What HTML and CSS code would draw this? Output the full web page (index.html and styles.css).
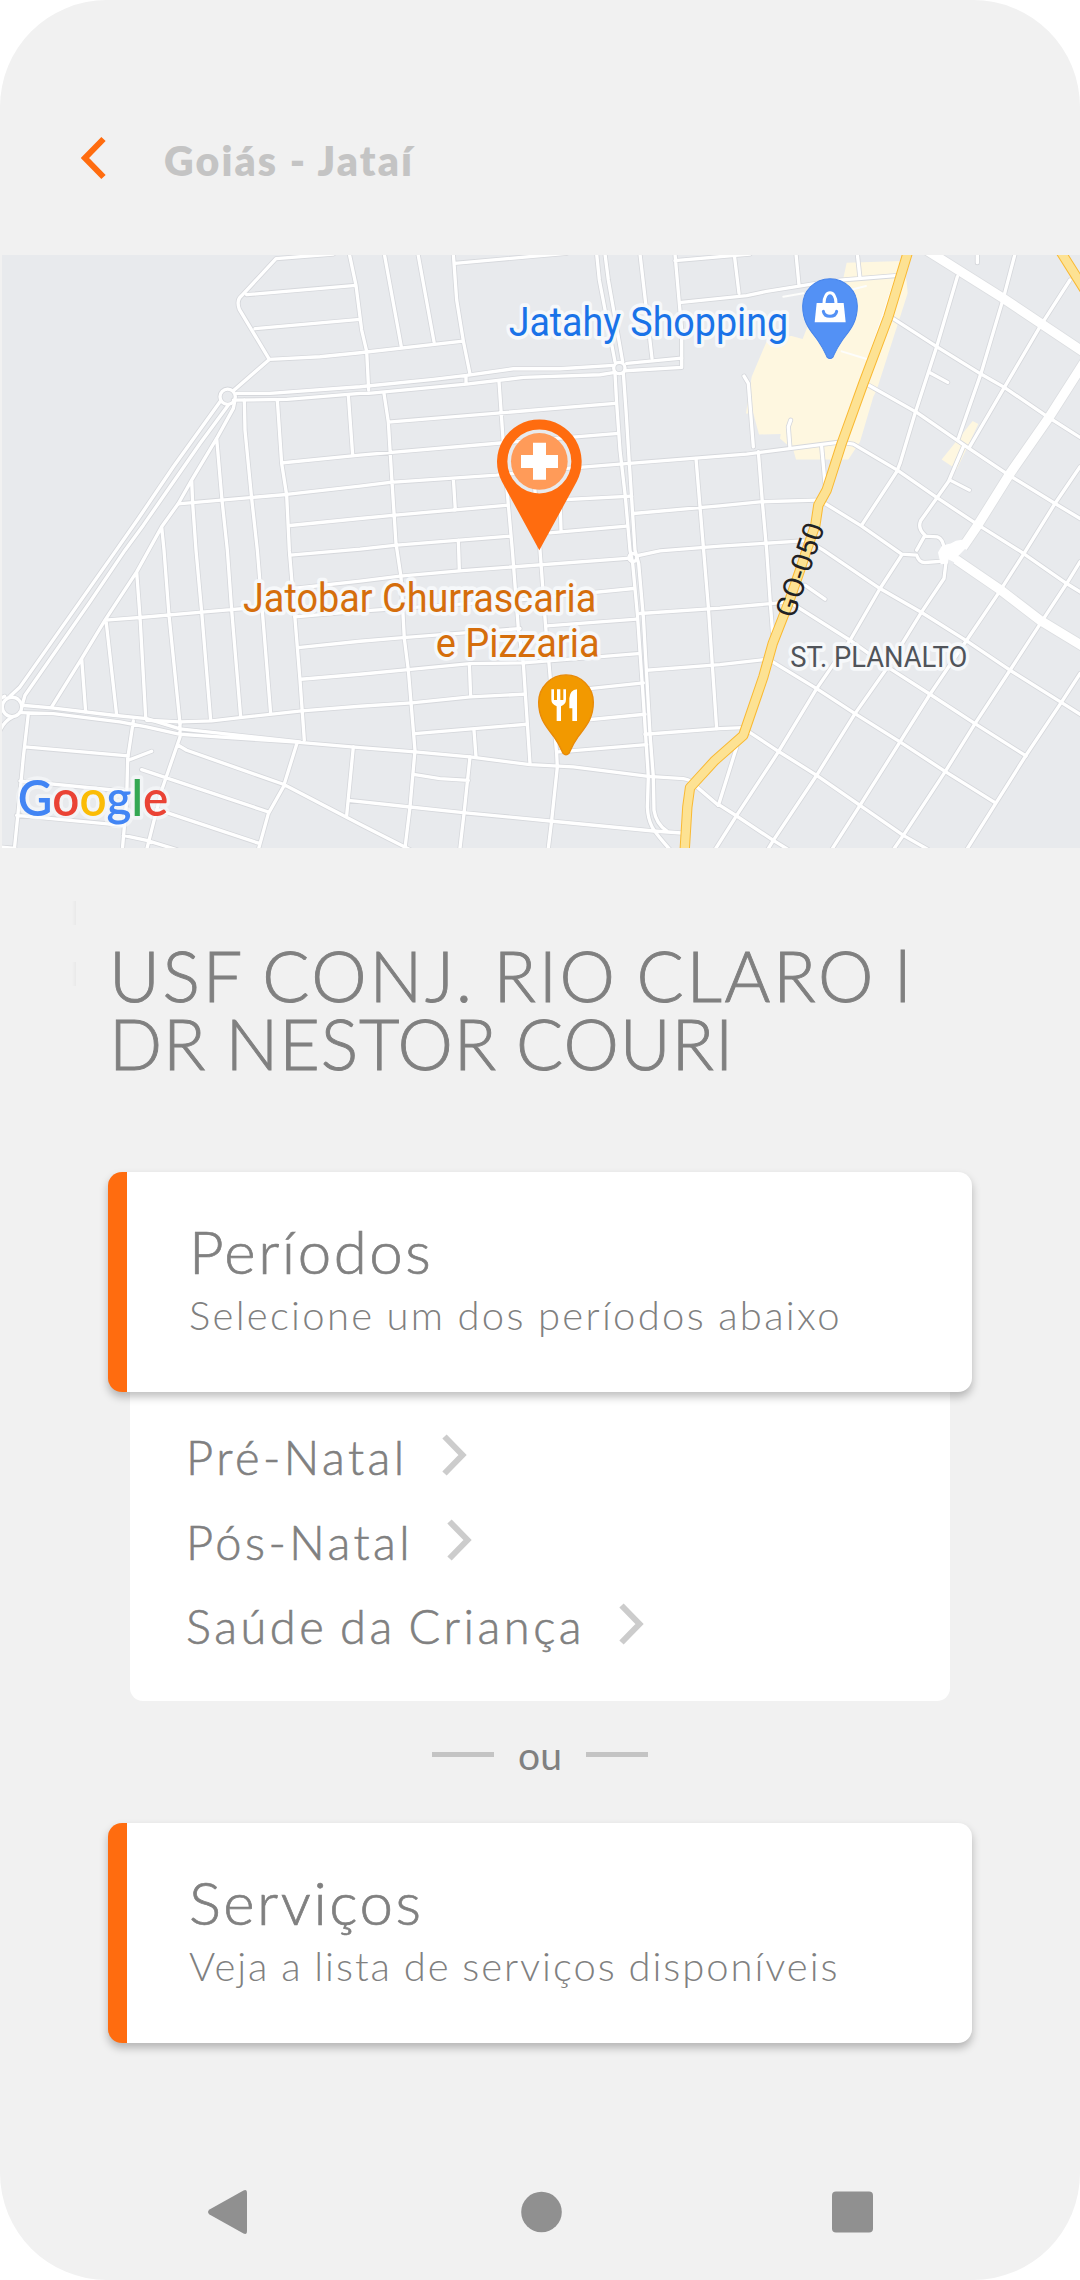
FILE: index.html
```html
<!DOCTYPE html>
<html lang="pt-BR">
<head>
<meta charset="utf-8">
<title>Unidade de saúde</title>
<link rel="stylesheet" href="styles.css">
</head>
<body>
<main class="screen">
  <header class="topbar">
    <svg class="back" viewBox="0 0 26 44"><path d="M22.500 3L4 22l18.500 19"/></svg>
    <span class="place">Goiás - Jataí</span>
  </header>

  <svg class="map" viewBox="6 15 3234 1778" preserveAspectRatio="none">
    <defs>
      <g id="streets">
        <path d="M1000 12L828 26 725 137Q708 150 718 178L808 328 700 422M740 134L1068 106M765 236L1080 208M808 328L960 320 1080 308 1390 273M1048 12L1068 106 1085 240 1100 304 1106 420M1153 12L1204 290M1254 12L1302 275M1360 12L1370 150 1390 273 1410 372M1365 40L1700 10"/>
        <path d="M710 430H810L1080 410 1300 388 1400 376 1540 356H1680L1840 346M700 450L860 448 1080 430 1105 430 1400 402 1570 382 1800 374 1845 367M1398 376V402M1880 340L2045 324V352L1875 362"/>
        <path d="M1790 12L1798 90 1845 335M1815 12L1825 90 1868 335M1845 370L1850 460 1860 600 1876 740 1890 900 1898 940 1912 1090 1930 1350 1945 1580 1942 1670C1945 1730 1965 1745 2010 1798M1870 370L1878 480 1888 640 1905 900 1916 940 1930 1100 1950 1450 1960 1580 1962 1680Q1968 1720 2000 1742M1920 12L1956 325M2025 12L2045 240V324M2025 32L2250 12M2045 157L2240 137 2300 124 2500 92 2685 77M2203 15L2217 130M2388 12L2397 105M2572 12L2580 85"/>
        <path d="M1152 430L1165 516 1175 680 1188 880 1203 980 1213 1165 1225 1260 1245 1500 1230 1670 1215 1793M1165 516L1845 460M850 638L1080 615 1510 578 1855 550M1497 395L1510 580 1525 765 1537 900 1555 1135 1570 1240 1590 1540M535 761L860 733 1080 708 1170 697 1490 675 1700 655 1860 642 2240 612 2520 576 2560 582 2692 660 2810 742 2940 828 3060 903 3200 1000 3245 1028M870 826L1080 805 1185 795 1525 765M1700 748L1895 738M1360 685L1366 780M870 915L1080 897 1190 885 1530 858M1650 848L1880 828M1680 740L1683 840M1603 700L1620 900 1637 1130 1647 1240 1670 1510 1672 1550 1655 1710 1645 1793M1375 870L1378 960"/>
        <path d="M2088 625L2110 890 2125 1070 2150 1435M1900 790L2160 767 2280 755 2450 750M1915 916L1980 902 2160 888 2410 872M880 1015L1080 993 1200 978 1380 962 1890 924M885 1100L1080 1083 1550 1050 1900 1015M895 1192L1080 1173 1210 1162 1560 1135M1640 1127L1910 1107M903 1287L1080 1272 1225 1258 1410 1240 1570 1238 1915 1210M440 1410L540 1415 635 1412 720 1402 905 1382 1080 1368 1235 1358 1410 1340 1570 1332M1740 1318L1930 1298M1408 1240L1412 1340M1245 1450L1580 1422M1750 1410L1935 1392M1422 1440L1428 1520M1675 1505L1940 1483M1240 1572L1320 1585 1405 1590M1410 1520L1392 1690 1380 1793M1045 1650L1230 1670 1390 1687 1650 1712 1960 1742 2045 1748M1060 1490L1040 1695"/>
        <path d="M65 1365L155 1373 340 1395 440 1405 540 1436 900 1475M60 1387L160 1390 360 1415 440 1430 540 1452 880 1475 1080 1492 1245 1505 1410 1520 1590 1543 1720 1550 1945 1578 2050 1585Q2068 1588 2072 1594L2155 1665M535 1485L560 1500 850 1602 1080 1722 1230 1798M892 1475L850 1610 805 1690 775 1798M425 1558L805 1685M480 1680L780 1780M370 1755L440 1770 530 1798M540 1420V1460L485 1620 440 1798M400 1412L383 1525 380 1650 367 1798M75 1490L385 1517M385 1530L455 1503M85 1390L70 1520 55 1680 43 1798M60 1592L370 1622M50 1695L370 1725M0 1790L45 1794M0 1440Q15 1410 38 1400M0 1345L14 1338"/>
        <path d="M660 455L520 650 415 805 345 905 250 1040 60 1310 30 1338M685 465L600 580 510 710 430 825 375 900 270 1055 75 1335 65 1370M704 455L700 475 650 565 575 690 535 760 485 830 410 965 315 1110 245 1225 155 1370M733 450L735 540 755 745 772 900 790 1120 812 1390M832 450L845 640 860 735 868 900 885 1105 900 1290 913 1470M1045 435L1058 615M650 565L666 750 682 900 695 1080 722 1400M575 690L578 760 588 900 605 1085 632 1410M485 830L492 900 507 1095 540 1420M410 965L420 1100 437 1400M318 1110L350 1395M245 1225L257 1385M315 1110L420 1102 605 1086 790 1070"/>
        <path d="M2872 80L2810 290 2745 490 2700 640 2690 665 2585 825M3045 12L3010 145 2943 370 2875 565M2932 12V38M3210 90L3120 230 3013 412 2908 592M2890 590L2845 695 2762 812Q2752 835 2775 855L2750 900M2775 858L2812 860Q2830 865 2833 900M3240 650L3165 760 3075 905 2998 1025 2900 1170 2790 1332 2700 1475 2580 1665 2495 1798M3240 935L3200 1000 3118 1125 3030 1260 2925 1420 2835 1565 2710 1755 2680 1798M3240 1270L3185 1355 3078 1515 2990 1655 2900 1798M2765 1085L2660 1255 2565 1390 2450 1575 2320 1770 2303 1798M2840 920L2832 985 2765 1085M2705 915L2640 1015 2550 1170 2450 1315 2335 1505 2210 1695 2145 1798M2210 1490L2160 1650 2155 1665"/>
        <path d="M2675 203L2810 290 2943 372 3013 412 3143 500 3245 565M2605 405L2750 487 2900 590 3030 677 3165 760 3245 808M2475 760L2585 828 2705 912 2750 915Q2757 937 2775 937L2830 933M2420 870L2470 900 2640 1015 2765 1087 2900 1172 3030 1260 3185 1357 3245 1395M2360 1050L2550 1170 2670 1255 2790 1332 2925 1420 3078 1517M2310 1230L2450 1315 2565 1390 2700 1475 2835 1563 2985 1657M2240 1440L2335 1503 2450 1575 2580 1665 2710 1755 2785 1798M2160 1665L2210 1697 2320 1770 2365 1798M2415 1005L2475 1047M2790 368L2843 397M2850 690L2908 720M2232 378L2245 400 2260 590M2372 510L2365 530 2370 595M2275 605L2287 755 2300 900 2311 1060 2318 1150M2465 590L2475 700M1920 1090L2160 1074 2360 1056M1940 1260L2160 1243 2295 1228M1935 1452L2160 1435 2230 1432"/>
        <circle cx="683" cy="440" r="23"/><circle cx="1858" cy="354" r="17"/><circle cx="1899" cy="922" r="12"/><circle cx="36" cy="1370" r="29"/>
      </g>
      <g id="avenues">
        <path d="M2760 -12L3010 145 3260 312M3262 322L3145 505 3030 670 2930 830 2888 892"/>
        <path d="M2868 928L3000 1018 3120 1110 3260 1195"/>
      </g>
      <path id="pin-shape" d="M-82 0A82 82 0 0 1 82 0C82 52 56 76 36 104 18 130 14 143 9 153Q0 162 -9 153C-14 143 -18 130 -36 104-56 76-82 52-82 0Z"/>
    </defs>

    <rect class="land" x="0" y="0" width="3240" height="1800"/>
    <path class="area" d="M2540 38L2705 33 2720 95 2723 130 2630 420 2620 440 2580 575 2545 628H2388L2380 600 2340 565 2342 552 2277 553 2260 490H2238L2255 380 2305 262 2375 258 2408 267 2430 210 2530 85ZM2918 513L2935 522 2870 658 2825 628Z"/>
    <use class="street-edge" href="#streets"/>
    <use class="avenue-edge" href="#avenues"/>
    <use class="street" href="#streets"/>
    <path class="lane" d="M2350 140L2410 130M2550 120L2598 108M2525 304L2600 327M2685 90L2580 400"/>
    <use class="avenue" href="#avenues"/>
    <path class="junction" d="M2814 907L2826 886 2852 880 2868 872 2904 866 2905 886 2874 918 2880 945 2846 928 2844 940 2822 942Z"/>
    <g id="highway">
      <path class="highway-edge" d="M2722 12L2665 200 2590 400 2525 580 2480 720 2455 765 2446 825 2418 905 2400 960 2365 1060 2318 1180 2290 1280 2230 1455 2145 1530 2070 1612 2062 1670 2054 1800M3182 5L3270 145"/>
      <path class="highway" d="M2722 12L2665 200 2590 400 2525 580 2480 720 2455 765 2446 825 2418 905 2400 960 2365 1060 2318 1180 2290 1280 2230 1455 2145 1530 2070 1612 2062 1670 2054 1800M3182 5L3270 145"/>
    </g>

    <g class="label">
      <text class="shop" x="1526" y="258" textLength="838" lengthAdjust="spacingAndGlyphs">Jatahy Shopping</text>
      <text class="food" x="729" y="1084" textLength="1060" lengthAdjust="spacingAndGlyphs">Jatobar Churrascaria</text>
      <text class="food" x="1307" y="1219" textLength="492" lengthAdjust="spacingAndGlyphs">e Pizzaria</text>
      <text class="district" x="2371" y="1250" textLength="531" lengthAdjust="spacingAndGlyphs">ST. PLANALTO</text>
      <text class="route" transform="translate(2382 1107) rotate(-71.500)" textLength="292" lengthAdjust="spacingAndGlyphs">GO-050</text>
      <text class="google" x="53" y="1698" textLength="452" lengthAdjust="spacingAndGlyphs"><tspan class="g-blue">G</tspan><tspan class="g-red">o</tspan><tspan class="g-yellow">o</tspan><tspan class="g-blue">g</tspan><tspan class="g-green">l</tspan><tspan class="g-red">e</tspan></text>
    </g>

    <g transform="translate(2490 168)">
      <use class="pin-shop" href="#pin-shape"/>
      <path class="glyph" d="M-40 -9H41L47 49H-46Z"/>
      <path class="glyph-line" d="M-18 -8C-18 -50 18 -50 18 -8"/>
      <path class="smile" d="M-20 16C-16 36 16 36 20 16"/>
    </g>
    <g transform="translate(1698 1356)">
      <use class="pin-food" href="#pin-shape"/>
      <path class="glyph" d="M-44 -39H-36V-7H-27V-39H-17V-7H-8V-39H0V-8Q0 6 -15 12V56H-28V12Q-44 6 -44 -8ZM33 -39V56H19V18H10V-12Q12 -38 33 -39Z"/>
    </g>
    <g transform="translate(1618 634)">
      <path class="pin-unit" fill-rule="evenodd" d="M0 266L-112 61A127 127 0 1 1 112 61ZM96 0A96 96 0 1 0 -96 0 96 96 0 1 0 96 0Z"/>
      <circle class="pin-core" r="85"/>
      <path class="glyph" d="M-19 -56H20V-19H56V20H20V55H-19V20H-55V-19H-19Z"/>
    </g>
  </svg>

  <h1 class="unit"><span class="unit-first">USF CONJ. RIO CLARO l</span><br><span class="unit-second">DR NESTOR COURI</span></h1>

  <section class="card">
    <h2>Períodos</h2>
    <p>Selecione um dos períodos abaixo</p>
  </section>
  <ul class="options">
    <li>Pré-Natal<svg class="go" viewBox="0 0 26 42"><path d="M3.500 2.500L21.500 21 3.500 39.500"/></svg></li>
    <li>Pós-Natal<svg class="go" viewBox="0 0 26 42"><path d="M3.500 2.500L21.500 21 3.500 39.500"/></svg></li>
    <li>Saúde da Criança<svg class="go" viewBox="0 0 26 42"><path d="M3.500 2.500L21.500 21 3.500 39.500"/></svg></li>
  </ul>
  <div class="or">ou</div>
  <section class="card">
    <h2>Serviços</h2>
    <p class="services-hint">Veja a lista de serviços disponíveis</p>
  </section>

  <nav class="system">
    <svg viewBox="0 0 40 46"><path d="M2 20.500L36 1.500Q39.500 0 39.500 4V42Q39.500 46 36 44.500L2 25.500Q-1 23 2 20.500Z"/></svg>
    <svg class="home" viewBox="0 0 41 41"><circle cx="20.500" cy="20.500" r="20.300"/></svg>
    <svg viewBox="0 0 41 41"><rect width="41" height="41" rx="4"/></svg>
  </nav>
</main>
</body>
</html>
```
FILE: styles.css
```css
* { box-sizing: border-box; }
body { margin: 0; background: #fff; }
h1, h2, p, ul { margin: 0; padding: 0; font-weight: 300; }
.screen {
  display: flex;
  flex-direction: column;
  width: 1080px;
  height: 2280px;
  overflow: hidden;
  background: #f1f1f1;
  border-radius: 107px;
  font-family: Lato, sans-serif;
  color: #808080;
}
.topbar {
  flex: none;
  display: flex;
  align-items: flex-start;
  gap: 57px;
  height: 255px;
  padding: 136px 0 0 81px;
}
.back { width: 26px; height: 44px; fill: none; stroke: #ff6c0f; stroke-width: 6; }
.place { color: #c4c4c4; font-size: 41px; font-weight: 800; line-height: 50px; letter-spacing: 2.1px; }

.map { flex: none; display: block; width: 1078px; height: 593px; margin-left: 2px; }
.land { fill: #e8eaed; }
.area { fill: #fef7e0; }
.street, .street-edge, .avenue, .avenue-edge, .lane, .highway, .highway-edge {
  fill: none;
  stroke-linejoin: round;
  stroke-linecap: round;
}
.street-edge { stroke: #d6d8dc; stroke-width: 15; }
.street { stroke: #fff; stroke-width: 10; }
.lane { stroke: #fdfdfb; stroke-width: 6; }
.avenue, .avenue-edge { stroke-linecap: butt; }
.avenue-edge { stroke: #dcdee1; stroke-width: 33; }
.avenue { stroke: #fff; stroke-width: 28; }
.junction { fill: #fff; }
.highway-edge { stroke: #f9b932; stroke-width: 31; }
.highway { stroke: #fde293; stroke-width: 25; }
.label text {
  font-family: Roboto, sans-serif;
  font-size: 123px;
  paint-order: stroke;
  stroke: rgba(248, 250, 252, .9);
  stroke-width: 22px;
  stroke-linejoin: round;
}
.label .shop { fill: #1a73e8; }
.label .food { fill: #d56e0c; }
.label .district { fill: #50545a; font-size: 87px; }
.label .route { fill: #202124; font-size: 87px; stroke: none; }
.label .google { font-family: Lato, sans-serif; font-weight: 600; font-size: 150px; stroke: rgba(248, 250, 252, .6); }
.g-blue { fill: #4285f4; }
.g-red { fill: #ea4335; }
.g-yellow { fill: #fbbc05; }
.g-green { fill: #34a853; }
.pin-shop { fill: #5391f5; stroke: #4583ea; stroke-width: 3; }
.pin-food { fill: #f29900; stroke: #e88a08; stroke-width: 4; }
.pin-unit { fill: #ff6c0f; }
.pin-core { fill: #ff9b59; }
.glyph { fill: #fff; }
.glyph-line { fill: none; stroke: #fff; stroke-width: 9; }
.smile { fill: none; stroke: #5391f5; stroke-width: 9; stroke-linecap: round; }

.unit {
  flex: none;
  height: 324px;
  padding: 93px 0 0 109px;
  background:
    linear-gradient(90deg, transparent, #e9e9e9) 72px 53px / 4px 24px no-repeat,
    linear-gradient(90deg, transparent, #e9e9e9) 72px 114px / 4px 24px no-repeat;
  font-size: 70px;
  line-height: 68px;
  white-space: nowrap;
  -webkit-text-stroke: .9px #808080;
}
.unit-first { letter-spacing: 2.7px; word-spacing: -3px; }
.unit-second { letter-spacing: .9px; word-spacing: -1px; }
.card {
  flex: none;
  position: relative;
  height: 220px;
  margin: 0 108px;
  padding: 43px 0 0 62px;
  background: #fff;
  border-left: 19px solid #ff6c0f;
  border-radius: 14px;
  box-shadow: 0 5px 9px rgba(0, 0, 0, .25);
}
.card h2 { font-size: 60px; line-height: 72px; letter-spacing: 2.5px; -webkit-text-stroke: .7px #808080; }
.card p { margin-top: 4px; font-size: 40px; line-height: 48px; letter-spacing: 2.3px; word-spacing: -1px; white-space: nowrap; }
.card .services-hint { letter-spacing: 1.95px; }
.options {
  flex: none;
  height: 309px;
  margin: 0 130px;
  padding: 36px 0 0 56px;
  background: #fff;
  border-radius: 0 0 13px 13px;
  list-style: none;
  font-size: 47px;
  letter-spacing: 3.5px;
  word-spacing: -3.5px;
  -webkit-text-stroke: .6px #808080;
}
.options li { display: flex; align-items: flex-start; height: 84.500px; gap: 33px; line-height: 58px; }
.go { width: 26px; height: 42px; margin-top: 6px; fill: none; stroke: #ccc; stroke-width: 6; }
.or {
  flex: none;
  display: flex;
  justify-content: center;
  gap: 24px;
  height: 122px;
  padding-top: 30px;
  font-size: 39px;
  font-weight: 400;
  line-height: 48px;
}
.or::before, .or::after { content: ""; width: 62px; height: 5px; margin-top: 21px; background: #c4c4c4; }
.system {
  flex: none;
  display: flex;
  align-items: center;
  justify-content: space-between;
  margin-top: 146px;
  padding: 0 207px 0 207px;
}
.system svg { width: 41px; height: 46px; fill: #909090; }
.system .home { margin-left: 3px; }
```
